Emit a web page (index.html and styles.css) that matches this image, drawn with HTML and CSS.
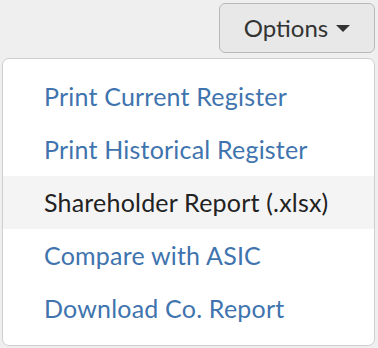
FILE: index.html
```html
<!DOCTYPE html>
<html lang="en">
<head>
  <meta charset="UTF-8" />
  <title>Options</title>
  <link rel="stylesheet" href="styles.css">
</head>
<body>
  <div class="toolbar">
    <button class="options-btn" type="button">Options <span class="caret"></span></button>
  </div>

  <ul class="menu">
    <li><a href="#">Print Current Register</a></li>
    <li><a href="#">Print Historical Register</a></li>
    <li class="active"><a href="#">Shareholder Report (.xlsx)</a></li>
    <li><a href="#">Compare with ASIC</a></li>
    <li><a href="#">Download Co. Report</a></li>
  </ul>
</body>
</html>
```
FILE: styles.css
```css
body {
  margin: 0;
  padding: 3px 3px 0 2px;
  background-color: #efefef;
  font-family: Lato, "Open Sans", sans-serif;
}

.toolbar {
  display: flex;
  justify-content: flex-end;
}

.options-btn {
  display: flex;
  align-items: center;
  gap: 8px;
  width: 156px;
  height: 50px;
  justify-content: center;
  background: #e8e8e8;
  border: 1.5px solid #b9b9b9;
  border-radius: 6px;
  color: #333;
  font-family: inherit;
  font-size: 24px;
  padding: 0 0 2px;
}

.caret {
  width: 0;
  height: 0;
  border-left: 7px solid transparent;
  border-right: 7px solid transparent;
  border-top: 7px solid #333;
  margin-top: 3px;
}

.menu {
  list-style: none;
  margin: 5px 0 0;
  padding: 11px 0 9px;
  height: 266px;
  background: white;
  border: 1.5px solid #cfcfcf;
  border-radius: 7px;
}

.menu li a {
  display: block;
  height: 53px;
  line-height: 53px;
  padding-left: 41px;
  color: #3f74ae;
  text-decoration: none;
  font-size: 25px;
  letter-spacing: 0.2px;
}

.menu li.active {
  background: #f4f4f4;
}

.menu li.active a {
  color: #222;
}
```
